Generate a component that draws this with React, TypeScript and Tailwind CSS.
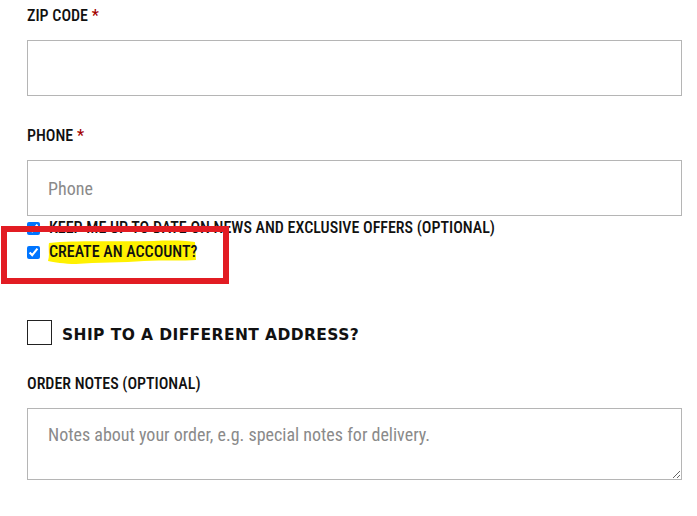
import { useState } from 'react'

const cond = { fontFamily: '"Roboto Condensed", "Liberation Sans Narrow", Roboto, sans-serif' }

function Req() {
  return <span className="text-[#a30000]"> *</span>
}

function Highlight() {
  // hand-drawn looking marker swipe behind the label
  return (
    <svg className="absolute left-[19px] top-0" width="152" height="25" viewBox="0 0 152 25">
      <path
        d="M3 3 C30 0 70 2 108 1 C128 0 143 1 149 2 L150 20 C138 21 118 20 98 21 C78 23 50 22 30 24 C18 24 8 22 2 21 C4 15 2 9 3 3 Z"
        fill="#fff100"
      />
    </svg>
  )
}

export default function App() {
  const [news, setNews] = useState(true)
  const [account, setAccount] = useState(true)
  const [ship, setShip] = useState(false)

  return (
    <div className="relative min-h-[516px] w-[697px] bg-white text-[#111]" style={cond}>
      <div className="flex w-[682px] flex-col pl-[27px] pt-[4px]">
        <label className="text-[16px] font-medium leading-[24px]">
          ZIP CODE
          <Req />
        </label>
        <input className="mt-[12px] h-[56px] w-full border border-[#b5b5b5] px-[20px] text-[18px] outline-none" />

        <label className="mt-[28px] text-[16px] font-medium leading-[24px]">
          PHONE
          <Req />
        </label>
        <input
          placeholder="Phone"
          className="mt-[12px] h-[56px] w-full border border-[#b5b5b5] px-[20px] text-[18px] outline-none placeholder:text-[#8a8a8a]"
        />

        <label className="flex h-[24px] items-center gap-[9px] text-[16px] font-medium leading-[24px]">
          <input type="checkbox" checked={news} onChange={(e) => setNews(e.target.checked)} className="m-0 h-[13px] w-[13px]" />
          KEEP ME UP TO DATE ON NEWS AND EXCLUSIVE OFFERS (OPTIONAL)
        </label>
        <label className="relative isolate flex h-[24px] items-center gap-[9px] text-[16px] font-medium leading-[24px]">
          <input type="checkbox" checked={account} onChange={(e) => setAccount(e.target.checked)} className="relative z-10 m-0 h-[13px] w-[13px]" />
          <Highlight />
          <span className="relative z-10">CREATE AN ACCOUNT?</span>
        </label>

        <label className="mt-[56px] flex h-[25px] items-center gap-[10px]">
          <span
            onClick={() => setShip(!ship)}
            className="flex h-[25px] w-[25px] items-center justify-center border border-[#222] text-[14px]"
          >
            {ship ? '✓' : ''}
          </span>
          <span
            className="mt-[7px] text-[15.5px] font-black tracking-[0.4px]"
            style={{ fontFamily: '"DejaVu Sans", "Liberation Sans", sans-serif' }}
          >
            SHIP TO A DIFFERENT ADDRESS?
          </span>
        </label>

        <label className="mt-[27px] text-[16px] font-medium leading-[24px]">ORDER NOTES (OPTIONAL)</label>
        <textarea
          placeholder="Notes about your order, e.g. special notes for delivery."
          className="mt-[12px] h-[72px] w-full border border-[#b5b5b5] px-[20px] pt-[12px] text-[18px] leading-[27px] outline-none placeholder:text-[#8a8a8a]"
        />
      </div>

      {/* red annotation frame */}
      <div className="pointer-events-none absolute left-[1px] top-[226px] h-[58px] w-[228px] border-[6px] border-[#e21c23]" />
    </div>
  )
}
